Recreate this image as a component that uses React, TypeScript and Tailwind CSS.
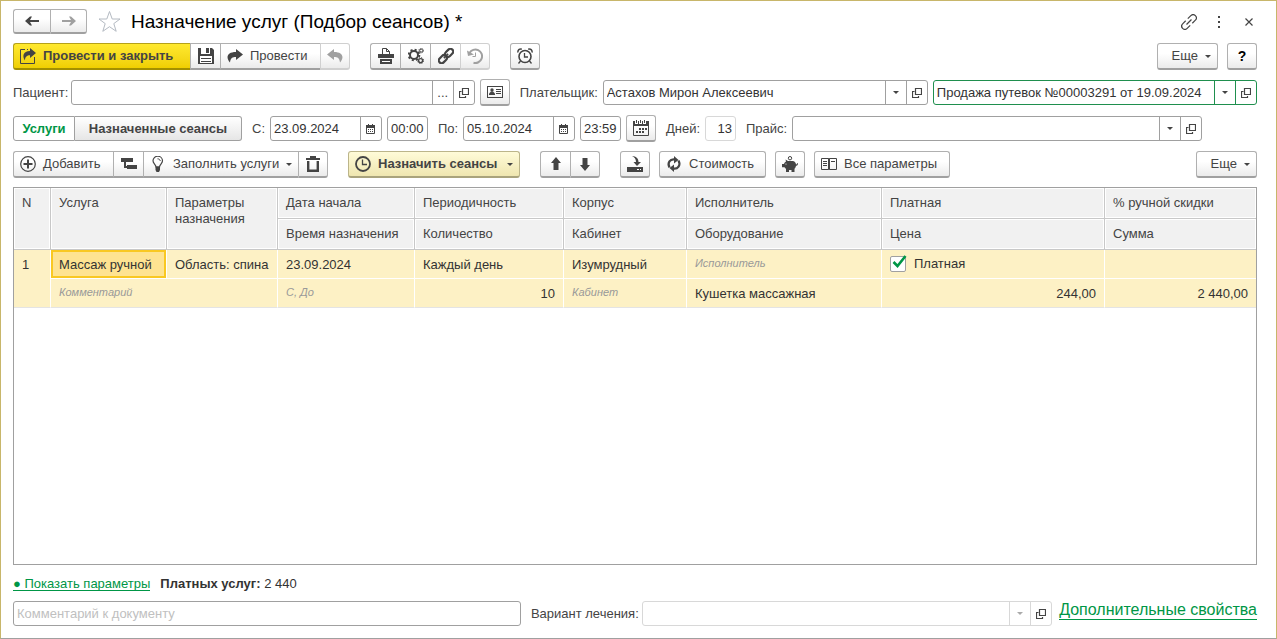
import type { ReactNode } from 'react';
import { clsx } from 'clsx';

function Svg({ size = 16, className, children }: { size?: number; className?: string; children: ReactNode }) {
  return (
    <svg
      width={size}
      height={size}
      viewBox={`0 0 ${size} ${size}`}
      fill="none"
      stroke="currentColor"
      className={clsx('shrink-0', className)}
      aria-hidden="true"
    >
      {children}
    </svg>
  );
}

const ArrowIcon = ({ left = false }) => (
  <Svg className={left ? '' : 'rotate-180'}>
    <path d="M1 8L6 3.500H8L6 7H15V9H6L8 12.500H6Z" fill="currentColor" stroke="none" />
  </Svg>
);

const StarIcon = () => (
  <Svg size={23} className="text-[#b4bac2]">
    <path d="M11.5 1.5L14.2 9H22L15.8 13.6L18.2 21.3L11.5 16.7L4.8 21.3L7.2 13.6L1 9H8.8Z" />
  </Svg>
);

const SubmitIcon = () => (
  <Svg>
    <path d="M5 1.5H.5V15.5H14.5V9M7 1.5H8" />
    <path d="M10 0L16 5L10 10V7.2C7 7.2 5 8.6 5 12.5C2 8.5 3 3 10 3Z" fill="currentColor" stroke="none" />
  </Svg>
);

const SaveIcon = () => (
  <Svg>
    <path d="M0 0H3V6H12V0H14L16 2V16H0Z" fill="currentColor" stroke="none" />
    <path d="M8 0H11V5H8Z" fill="currentColor" stroke="none" />
    <path d="M2 8H14V15H2Z" fill="#fff" stroke="none" />
    <path d="M3 10.5H13M3 13.5H13" />
  </Svg>
);

const ForwardIcon = ({ back = false }) => (
  <Svg className={back ? '-scale-x-100' : ''}>
    <path d="M9 1L16 6.5L9 12V9C5.5 9 3.5 10 3 14.5C-1.5 9.5 0 4 9 4Z" fill="currentColor" stroke="none" />
  </Svg>
);

const PrintIcon = () => (
  <Svg>
    <path d="M4.5 6V.5H8.5L11.5 3.5V6M8.5 .5V3.5H11.5" />
    <path d="M0 6H16V10H0ZM2 11H14V16H2Z" fill="currentColor" stroke="none" />
    <path d="M4 13.5H12" stroke="#fff" />
  </Svg>
);

const GearsIcon = () => (
  <Svg>
    <circle cx="6" cy="7" r="4" strokeWidth="2" />
    <circle cx="6" cy="7" r="5.3" strokeWidth="2" strokeDasharray="2 2.16" />
    <circle cx="13.2" cy="2.6" r="1.5" />
    <circle cx="13.2" cy="2.6" r="2.3" strokeDasharray="1 .8" />
    <circle cx="12.6" cy="12.6" r="2" strokeWidth="1.4" />
    <circle cx="12.6" cy="12.6" r="3" strokeDasharray="1.3 1.06" />
  </Svg>
);

const ChainIcon = () => (
  <Svg>
    <g transform="rotate(-45 8 8)" strokeWidth="2.2">
      <rect x="-1" y="5.2" width="9" height="5.6" rx="2.8" />
      <rect x="8" y="5.2" width="9" height="5.6" rx="2.8" />
      <path d="M5 8H11" strokeWidth="1.6" />
    </g>
  </Svg>
);

const ThinChainIcon = () => (
  <Svg>
    <g transform="rotate(-45 8 8)" strokeWidth="1.2">
      <path d="M6.5 4.8H2.2A3.2 3.2 0 0 0 2.2 11.2H6.5M9.5 4.8H13.8A3.2 3.2 0 0 1 13.8 11.2H9.5M4.5 8H11.5" />
    </g>
  </Svg>
);

const HistoryIcon = () => (
  <Svg>
    <path d="M2.5 5A6.7 6.7 0 1 1 6.5 14.7" strokeWidth="2" />
    <path d="M0 2.5L1 8L7 6.5Z" fill="currentColor" stroke="none" />
    <path d="M8.5 4.5V8.5H5.5" />
  </Svg>
);

const AlarmIcon = () => (
  <Svg>
    <circle cx="8" cy="8.5" r="6" strokeWidth="1.6" />
    <path d="M7.5 5V9H11M3.5 13L1.5 15.5M12.5 13L14.5 15.5" strokeWidth="1.3" />
    <path d="M1 4.5C.5 2 2.5 .5 4.8 1.3M15 4.5C15.5 2 13.5 .5 11.2 1.3" strokeWidth="1.5" />
  </Svg>
);

const CardIcon = () => (
  <Svg>
    <rect x=".5" y="2.5" width="15" height="11" />
    <circle cx="5" cy="6" r="1.7" fill="currentColor" stroke="none" />
    <path d="M2 11V9.500L4 7.500H6L8 9.500V11Z" fill="currentColor" stroke="none" />
    <path d="M9 5.5H14M9 7.5H14M9 9.5H14" />
  </Svg>
);

const OpenIcon = () => (
  <Svg size={10}>
    <path d="M3.5 .5H9.5V6.5H3.5ZM2.500 3.500H.5V9.5H6.5V8" strokeWidth="1.2" />
  </Svg>
);

const SmallCalendarIcon = () => (
  <Svg size={10}>
    <path d="M.5 2.5H8.500V9.5H.5Z" />
    <path d="M0 1H9V4H0ZM2 0H3V2H2ZM6 0H7V2H6Z" fill="currentColor" stroke="none" />
    <path d="M2 5.5H8M2 7.5H8" strokeDasharray="1 1" />
  </Svg>
);

const CalendarIcon = () => (
  <Svg>
    <path d="M.5 2V15.5H15.5V2" />
    <path
      d="M0 1H2V4H5V1H6V4H9V1H10V4H13V1H16V6H0ZM3 0H4V3H3ZM7 0H8V3H7ZM11 0H12V3H11Z"
      fill="currentColor"
      stroke="none"
    />
    <path d="M6 9H14M3 12H11" strokeWidth="2" strokeDasharray="2 1" />
  </Svg>
);

const AddIcon = () => (
  <Svg>
    <circle cx="8" cy="8" r="7.3" strokeWidth="1.2" />
    <path d="M8 3.5V12.5M3.5 8H12.5" strokeWidth="2" />
  </Svg>
);

const TreeIcon = () => (
  <Svg>
    <path d="M0 2H12V6H0ZM6 9H16V13H6ZM3 6H5V10H7V12H3Z" fill="currentColor" stroke="none" />
  </Svg>
);

const BulbIcon = () => (
  <Svg>
    <path d="M6 11C6 8.5 3 7.5 3 4.800A4.7 4.5 0 0 1 12.5 4.8C12.5 7.5 9.5 8.5 9.5 11Z" strokeWidth="1.2" />
    <path d="M7.5 2.8C9 2.8 10 3.6 10.3 5" />
    <path d="M5.5 10.500H10V14L9 16H6.5L5.5 14Z" fill="currentColor" stroke="none" />
  </Svg>
);

const TrashIcon = () => (
  <Svg>
    <path d="M1 3H15M5 1H11" strokeWidth="2" />
    <path d="M3.2 5V14.800H12.800V5" strokeWidth="2.4" />
  </Svg>
);

const ClockIcon = () => (
  <Svg>
    <circle cx="8" cy="8" r="7" strokeWidth="1.8" />
    <path d="M7.5 3.5V8.5H12" strokeWidth="1.3" />
  </Svg>
);

const UpIcon = ({ down = false }) => (
  <Svg className={down ? 'rotate-180' : ''}>
    <path d="M8 1L13 7H10.5V14H5.5V7H3Z" fill="currentColor" stroke="none" />
  </Svg>
);

const LoadIcon = () => (
  <Svg>
    <path d="M0 11H16V16H0Z" fill="currentColor" stroke="none" />
    <path d="M10 13.5H12M13 13.5H14" stroke="#fff" />
    <path d="M5 0C9 .2 11.500 2.5 11.500 6H14L10 10L6.5 6H9C9 3 7.5 1.2 5 0Z" fill="currentColor" stroke="none" />
  </Svg>
);

const RefreshIcon = () => (
  <Svg>
    <path d="M3.500 11.500C1 7 4 2.500 9 3.500M12.500 4.500C15 9 12 13.500 7 12.500" strokeWidth="2.2" />
    <path d="M8 0L12.500 4L8 7.500ZM8 16L3.500 12L8 8.500Z" fill="currentColor" stroke="none" />
  </Svg>
);

const PiggyIcon = () => (
  <Svg>
    <path
      d="M0 8L2 8C2.5 6.5 3 6 4 5.5L3.5 3.5L6 5H11C13 5.5 14 7 14 8.5C15 8.5 15 7.5 15 7L16 7.5C16 9 15 9.8 14 9.8C13.8 11.2 13.2 12 12.5 12.8V16H9.5V14H7V16H4V13L2.5 11.2H0Z"
      fill="currentColor"
      stroke="none"
    />
    <circle cx="8" cy="2.2" r="1.7" />
    <circle cx="4" cy="8" r=".6" fill="#fff" stroke="none" />
  </Svg>
);

const ColumnsIcon = () => (
  <Svg>
    <path d="M.5 2.5H7.5V13.5H.5ZM8.5 2.5H15.5V13.5H8.5ZM8 2V14" />
    <path d="M2 5.5H6M2 7.5H6M2 9.5H6M10 5.5H14" />
  </Svg>
);

const Caret = ({ className = '' }) => (
  <span className={clsx('size-0 border-x-[3px] border-t-[3px] border-x-transparent border-t-current', className)} />
);

type ButtonProps = {
  children: ReactNode;
  label?: string;
  className?: string;
  disabled?: boolean;
  tone?: 'plain' | 'yellow' | 'cream';
};

function Button({ children, label, className, disabled, tone = 'plain' }: ButtonProps) {
  return (
    <button
      type="button"
      aria-label={label}
      disabled={disabled}
      className={clsx(
        'flex h-full shrink-0 items-center gap-[7px] whitespace-nowrap border border-b-2 bg-linear-to-b px-[6px] not-last:border-r-0 first:rounded-l-[3px] last:rounded-r-[3px]',
        tone === 'plain' && 'from-white from-40% to-[#ebebeb]',
        tone === 'yellow' && 'border-[#b5a11a] border-b-[#a39000] from-[#ffe92e] to-[#efcf00] font-bold',
        tone === 'cream' && 'border-[#bcb58a] border-b-[#a9a37c] from-[#fffbd8] to-[#efe6b0] font-bold',
        tone === 'plain' && (disabled ? 'border-[#d0d0d0] text-[#a0a0a0]' : 'border-[#b0b0b0] border-b-[#a0a0a0]'),
        className ?? 'w-[30px] justify-center',
      )}
    >
      {children}
    </button>
  );
}

function Group({ children }: { children: ReactNode }) {
  return <div className="flex h-full shrink-0">{children}</div>;
}

type FieldProps = {
  id: string;
  value?: string;
  className: string;
  border?: string;
  label?: string;
  placeholder?: string;
  align?: string;
  addons?: { label: string; icon: ReactNode; muted?: boolean }[];
};

function Field({ id, value = '', className, border = 'border-[#a0a0a0]', label, placeholder, align, addons = [] }: FieldProps) {
  return (
    <div className={clsx('flex h-[25px] min-w-0 rounded-[3px] border bg-white', border, className)}>
      <input
        id={id}
        type="text"
        defaultValue={value}
        aria-label={label}
        placeholder={placeholder}
        className={clsx('w-full min-w-0 flex-1 bg-transparent px-[3px] text-[#333] outline-none placeholder:text-[#c0c0c0]', align)}
      />
      {addons.map((a) => (
        <button
          key={a.label}
          type="button"
          aria-label={a.label}
          className={clsx('flex w-[21px] shrink-0 items-center justify-center border-l', border, a.muted && 'text-[#aaa]')}
        >
          {a.icon}
        </button>
      ))}
    </div>
  );
}

const drop = { label: 'Выбрать из списка', icon: <Caret /> };
const open = { label: 'Открыть', icon: <OpenIcon /> };
const calendar = { label: 'Выбрать дату', icon: <SmallCalendarIcon /> };

const headBase = 'border-r border-b border-[#c8c8c8] bg-[#f1f1f1] px-2 text-left font-normal shadow-[inset_0_0_0_1px_#fff]';
const headCell = clsx(headBase, 'last:border-r-0');
const topHeadCell = clsx(headBase, 'pt-[7px] align-top');
const cellBase = 'border-r border-b border-white px-2 last:border-r-0';
const cell = clsx(cellBase, 'pt-[2px]');
const hintCell = clsx(cellBase, 'pb-[2px] text-[11px] italic text-[#999]');
const lastRow = 'border-b-[#e4e4e4]';

function ServicesTable() {
  return (
    <div className="min-h-[200px] flex-1 overflow-hidden border border-[#a0a0a0] bg-white">
      <table className="w-full table-fixed border-separate border-spacing-0 leading-4">
        <colgroup>
          <col className="w-[37px]" />
          <col className="w-[116px]" />
          <col className="w-[111px]" />
          <col className="w-[137px]" />
          <col className="w-[149px]" />
          <col className="w-[123px]" />
          <col className="w-[195px]" />
          <col className="w-[223px]" />
          <col className="w-[151px]" />
        </colgroup>
        <thead>
          <tr className="h-[31px]">
            <th rowSpan={2} className={topHeadCell}>N</th>
            <th rowSpan={2} className={topHeadCell}>Услуга</th>
            <th rowSpan={2} className={topHeadCell}>Параметры назначения</th>
            <th className={headCell}>Дата начала</th>
            <th className={headCell}>Периодичность</th>
            <th className={headCell}>Корпус</th>
            <th className={headCell}>Исполнитель</th>
            <th className={headCell}>Платная</th>
            <th className={headCell}>% ручной скидки</th>
          </tr>
          <tr className="h-[31px]">
            <th className={headCell}>Время назначения</th>
            <th className={headCell}>Количество</th>
            <th className={headCell}>Кабинет</th>
            <th className={headCell}>Оборудование</th>
            <th className={headCell}>Цена</th>
            <th className={headCell}>Сумма</th>
          </tr>
        </thead>
        <tbody className="bg-[#fdf1c5] text-[#333]">
          <tr className="h-[29px]">
            <td rowSpan={2} className={clsx(cellBase, lastRow, 'pt-[7px] align-top')}>1</td>
            <td className={clsx(cell, 'bg-[#fee391] whitespace-nowrap shadow-[inset_0_0_0_2px_#f9c822]')}>Массаж ручной</td>
            <td className={clsx(cell, 'whitespace-nowrap')}>Область: спина</td>
            <td className={cell}>23.09.2024</td>
            <td className={cell}>Каждый день</td>
            <td className={cell}>Изумрудный</td>
            <td className={hintCell}>Исполнитель</td>
            <td className={cellBase}>
              <label className="flex items-center gap-2">
                <span className="relative size-4">
                  <input
                    type="checkbox"
                    defaultChecked
                    className="peer block size-4 appearance-none rounded-[2px] border border-[#a0a0a0] bg-white"
                  />
                  <svg
                    viewBox="0 0 16 16"
                    className="pointer-events-none absolute inset-0 hidden overflow-visible peer-checked:block"
                    fill="none"
                    stroke="#009646"
                    strokeWidth="2.6"
                  >
                    <path d="M3.5 6L7.5 10L15.500 0" />
                  </svg>
                </span>
                Платная
              </label>
            </td>
            <td className={cell}></td>
          </tr>
          <tr className="h-[29px]">
            <td colSpan={2} className={clsx(hintCell, lastRow)}>Комментарий</td>
            <td className={clsx(hintCell, lastRow)}>С, До</td>
            <td className={clsx(cell, lastRow, 'text-right')}>10</td>
            <td className={clsx(hintCell, lastRow)}>Кабинет</td>
            <td className={clsx(cell, lastRow)}>Кушетка массажная</td>
            <td className={clsx(cell, lastRow, 'text-right')}>244,00</td>
            <td className={clsx(cell, lastRow, 'text-right')}>2 440,00</td>
          </tr>
        </tbody>
      </table>
    </div>
  );
}

export default function App() {
  return (
    <div className="flex min-h-screen flex-col gap-[9px] border border-[#c8b66a] border-b-[#a0a0a0] bg-white pt-2 pr-[19px] pb-3 pl-3 font-['Liberation_Sans',Arial,sans-serif] text-[13px] leading-5 text-[#444]">
      {/* Title */}
      <header className="flex h-[25px] items-center">
        <Group>
          <Button label="Назад" className="w-[37px] justify-center"><ArrowIcon left /></Button>
          <Button label="Вперед" className="w-[37px] justify-center text-[#a0a0a0]"><ArrowIcon /></Button>
        </Group>
        <button type="button" aria-label="В избранное" className="ml-[11px]"><StarIcon /></button>
        <h1 className="ml-[10px] flex-1 text-[19px] text-black">Назначение услуг (Подбор сеансов) *</h1>
        <div className="flex items-center gap-[14px]">
          <button type="button" aria-label="Ссылка"><ThinChainIcon /></button>
          <button type="button" aria-label="Меню">
            <Svg>
              <path d="M7 2H9V4H7ZM7 7H9V9H7ZM7 12H9V14H7Z" fill="currentColor" stroke="none" />
            </Svg>
          </button>
          <button type="button" aria-label="Закрыть">
            <Svg>
              <path d="M4.5 4.5L11.5 11.5M11.5 4.5L4.5 11.5" strokeWidth="1.2" />
            </Svg>
          </button>
        </div>
      </header>

      {/* Main commands */}
      <div className="flex h-[27px] gap-5">
        <Group>
          <Button tone="yellow" className="w-[177px]"><SubmitIcon />Провести и закрыть</Button>
          <Button label="Записать"><SaveIcon /></Button>
          <Button className="w-[100px]"><ForwardIcon />Провести</Button>
          <Button label="Отмена проведения" disabled><ForwardIcon back /></Button>
        </Group>
        <Group>
          <Button label="Печать"><PrintIcon /></Button>
          <Button label="Настройки"><GearsIcon /></Button>
          <Button label="Связи"><ChainIcon /></Button>
          <Button label="История" disabled><HistoryIcon /></Button>
        </Group>
        <Group>
          <Button label="Напоминание"><AlarmIcon /></Button>
        </Group>
        <div className="ml-auto flex gap-[9px]">
          <Group>
            <Button className="w-[61px] justify-end">Еще<Caret /></Button>
          </Group>
          <Group>
            <Button label="Справка"><span className="text-[14px] font-bold text-black">?</span></Button>
          </Group>
        </div>
      </div>

      {/* Patient and payer */}
      <div className="flex h-[27px] items-center">
        <label htmlFor="patient" className="w-[58px] shrink-0">Пациент:</label>
        <Field id="patient" className="flex-[404]" addons={[{ label: 'Выбрать', icon: '...' }, open]} />
        <div className="ml-[5px] h-full">
          <Group>
            <Button label="Карточка пациента"><CardIcon /></Button>
          </Group>
        </div>
        <label htmlFor="payer" className="ml-[10px] w-[83px] shrink-0">Плательщик:</label>
        <Field id="payer" value="Астахов Мирон Алексеевич" className="flex-[325]" addons={[drop, open]} />
        <Field
          id="sale"
          label="Документ продажи"
          value="Продажа путевок №00003291 от 19.09.2024"
          className="ml-[5px] flex-[324]"
          border="border-[#1f8f4e]"
          addons={[drop, open]}
        />
      </div>

      {/* Period */}
      <div className="flex h-[27px] items-center">
        <div className="flex h-[25px] shrink-0 font-bold">
          <button type="button" className="w-[62px] rounded-l-[3px] border border-[#a0a0a0] text-[#009646]">Услуги</button>
          <button
            type="button"
            className="w-[167px] rounded-r-[3px] border border-l-0 border-[#a0a0a0] bg-linear-to-b from-white to-[#e6e6e6]"
          >
            Назначенные сеансы
          </button>
        </div>
        <label htmlFor="from" className="ml-[10px] w-[18px] shrink-0">С:</label>
        <Field id="from" value="23.09.2024" className="w-[112px] shrink-0" addons={[calendar]} />
        <Field id="fromTime" label="Время начала" value="00:00" className="ml-[5px] w-[41px] shrink-0" />
        <label htmlFor="to" className="ml-[10px] w-[25px] shrink-0">По:</label>
        <Field id="to" value="05.10.2024" className="w-[112px] shrink-0" addons={[calendar]} />
        <Field id="toTime" label="Время окончания" value="23:59" className="ml-[5px] w-[41px] shrink-0" />
        <div className="ml-[5px] h-full">
          <Group>
            <Button label="Выбрать период"><CalendarIcon /></Button>
          </Group>
        </div>
        <label htmlFor="days" className="ml-[10px] w-[39px] shrink-0">Дней:</label>
        <Field id="days" value="13" className="w-[31px] shrink-0" border="border-[#d8d8d8]" align="text-right" />
        <label htmlFor="price" className="ml-[10px] w-[46px] shrink-0">Прайс:</label>
        <Field id="price" className="mr-[55px] flex-1" addons={[drop, open]} />
      </div>

      {/* Table commands */}
      <div className="flex h-[27px] gap-5">
        <Group>
          <Button className="w-[100px]"><AddIcon />Добавить</Button>
          <Button label="Добавить группу"><TreeIcon /></Button>
          <Button className="w-[155px]"><BulbIcon />Заполнить услуги<Caret className="ml-auto" /></Button>
          <Button label="Удалить"><TrashIcon /></Button>
        </Group>
        <Group>
          <Button tone="cream" className="w-[172px]"><ClockIcon />Назначить сеансы<Caret className="ml-auto" /></Button>
        </Group>
        <Group>
          <Button label="Вверх"><UpIcon /></Button>
          <Button label="Вниз"><UpIcon down /></Button>
        </Group>
        <div className="flex gap-[9px]">
          <Group>
            <Button label="Загрузить"><LoadIcon /></Button>
          </Group>
          <Group>
            <Button className="w-[107px]"><RefreshIcon />Стоимость</Button>
          </Group>
          <Group>
            <Button label="Оплата"><PiggyIcon /></Button>
          </Group>
          <Group>
            <Button className="w-[136px]"><ColumnsIcon />Все параметры</Button>
          </Group>
        </div>
        <div className="ml-auto">
          <Group>
            <Button className="w-[61px] justify-end">Еще<Caret /></Button>
          </Group>
        </div>
      </div>

      <ServicesTable />

      {/* Totals */}
      <div className="flex h-[18px] items-center gap-[10px] pt-[2px] text-[#333]">
        <a href="#params" className="border-b border-[#009646] leading-[13px] text-[#009646]">● Показать параметры</a>
        <p><b>Платных услуг:</b> 2 440</p>
      </div>

      <footer className="flex h-[25px] items-center">
        <Field id="comment" label="Комментарий к документу" placeholder="Комментарий к документу" className="flex-[508]" />
        <label htmlFor="variant" className="ml-[10px] w-[111px] shrink-0">Вариант лечения:</label>
        <Field
          id="variant"
          className="flex-[410]"
          border="border-[#d8d8d8]"
          addons={[{ ...drop, muted: true }, open]}
        />
        <a
          href="#extra"
          className="ml-[7px] shrink-0 self-start border-b border-[#009646] text-[16px] leading-[18px] text-[#009646]"
        >
          Дополнительные свойства
        </a>
      </footer>
    </div>
  );
}
